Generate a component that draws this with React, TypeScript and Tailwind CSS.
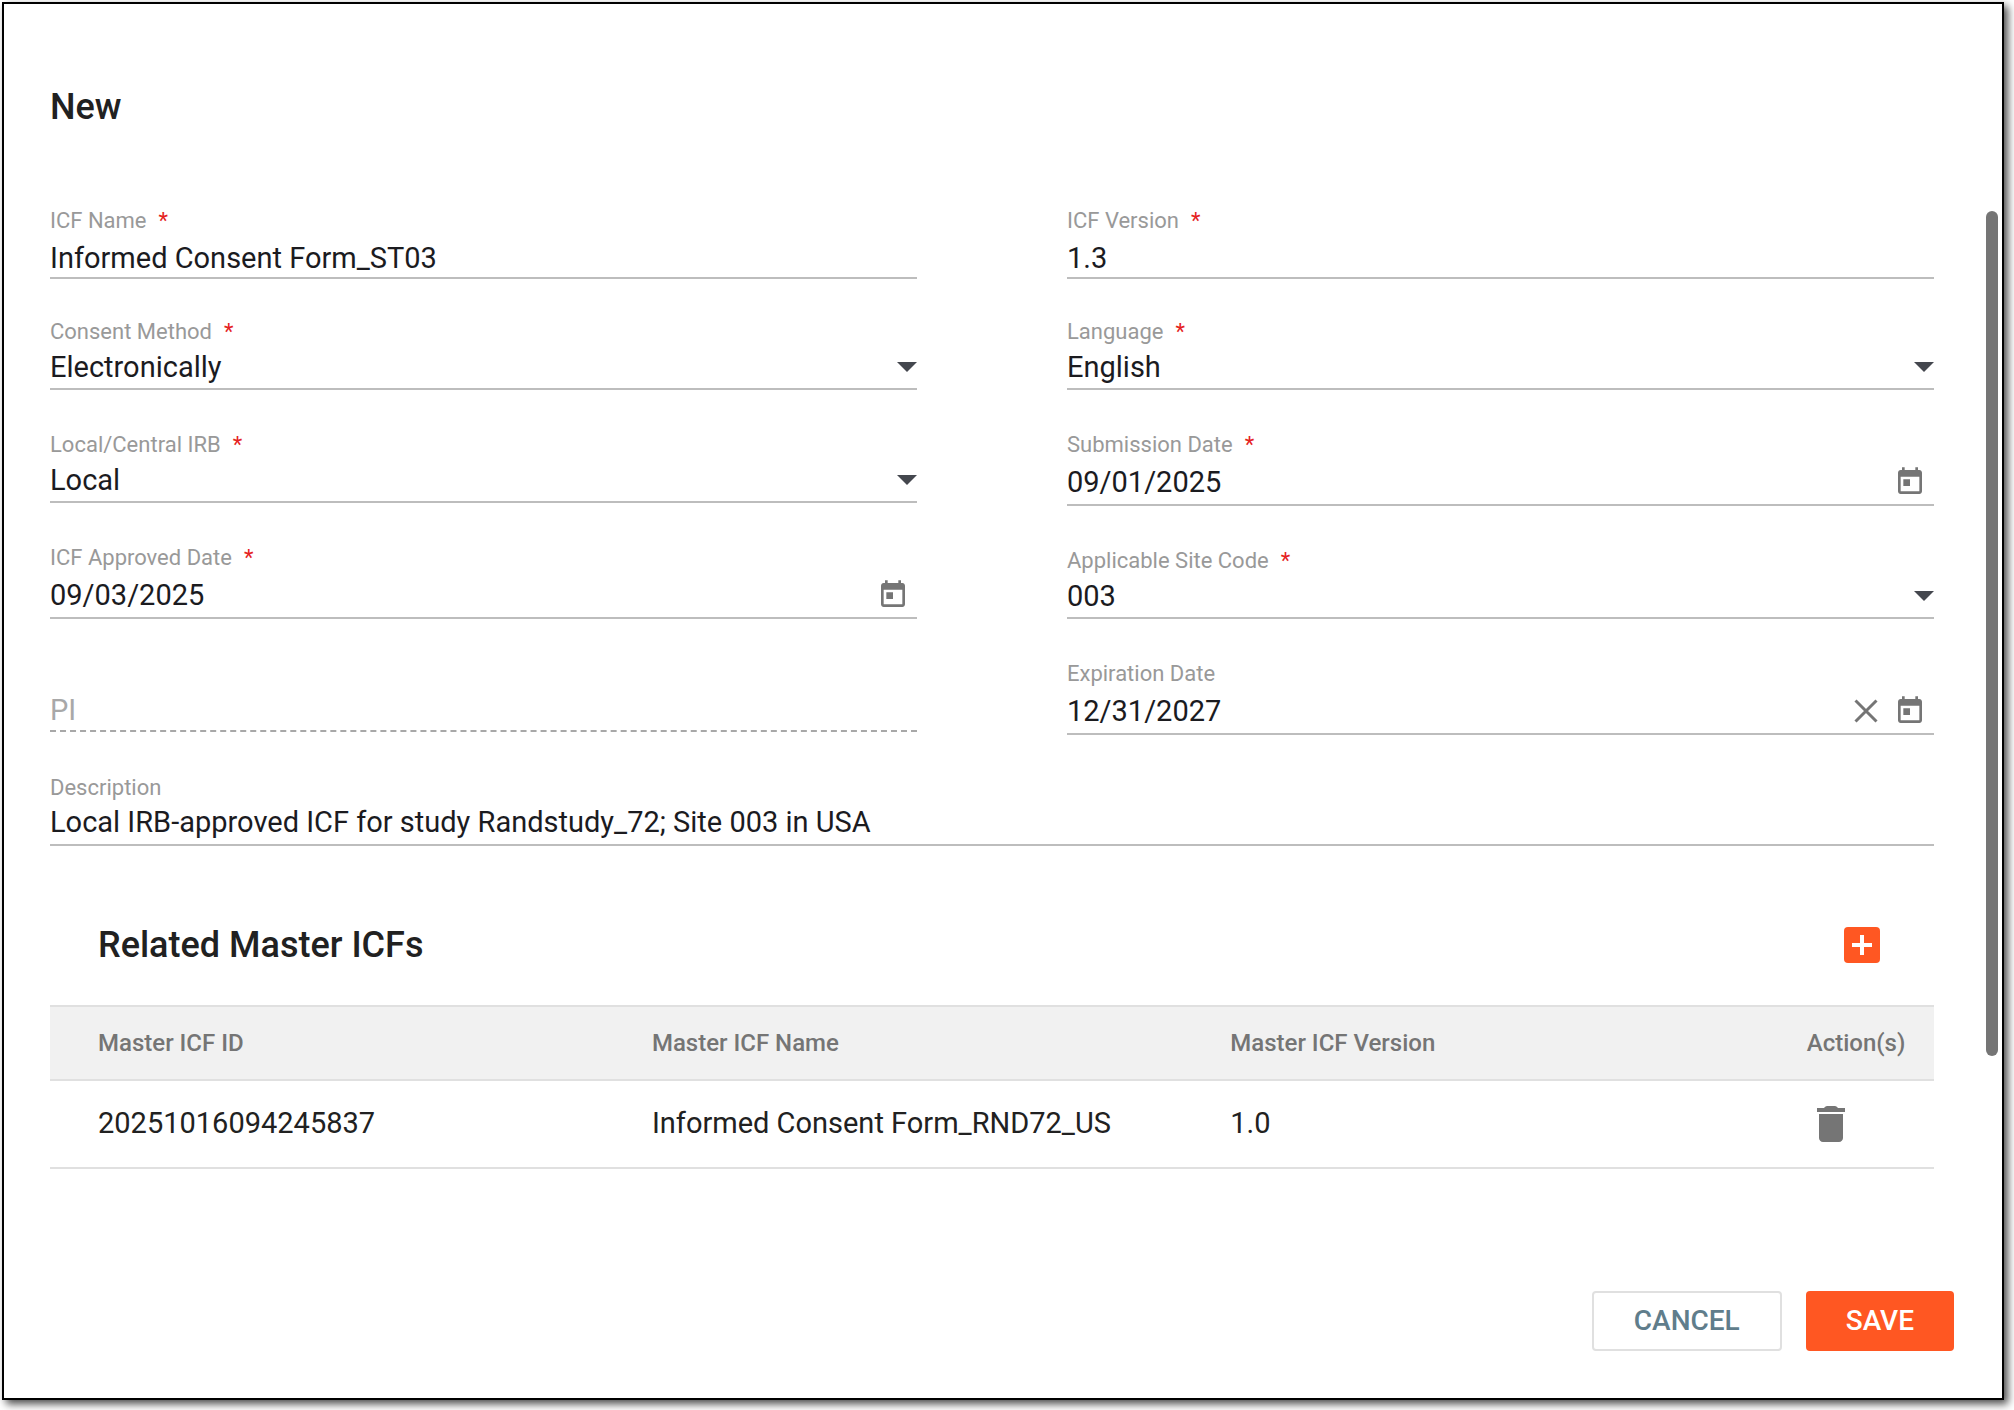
import React, { useState } from 'react';

interface FieldProps {
  id: string;
  label: string;
  value: string;
  required?: boolean;
  onChange: (id: string, value: string) => void;
}

interface SelectFieldProps extends FieldProps {
  options: string[];
}

interface DateFieldProps extends FieldProps {
  clearable?: boolean;
}

interface MasterIcf {
  id: string;
  name: string;
  version: string;
}

const FieldLabel: React.FC<{ id: string; label: string; required?: boolean }> = ({ id, label, required }) => (
  <label htmlFor={id} className="block text-[22px] leading-6 text-[#999999]">
    {label}
    {required && <span className="ml-3 text-[#e52222]">*</span>}
  </label>
);

const ArrowIcon = () => (
  <svg viewBox="0 0 20 10" className="pointer-events-none absolute right-0 top-[13px] h-[10px] w-5" fill="#44474e">
    <path d="M0 0h20L10 10z" />
  </svg>
);

const CalendarIcon = () => (
  <svg viewBox="0 0 24 24" className="size-8" fill="#757575">
    <path d="M19 3h-1V1h-2v2H8V1H6v2H5c-1.11 0-1.99.9-1.99 2L3 19c0 1.1.89 2 2 2h14c1.1 0 2-.9 2-2V5c0-1.1-.9-2-2-2zm0 16H5V8h14v11zM7 10h5v5H7z" />
  </svg>
);

const ClearIcon = () => (
  <svg viewBox="0 0 24 24" className="size-6" fill="none" stroke="#757575" strokeWidth="3">
    <path d="M1.5 1.5l21 21M22.5 1.5l-21 21" />
  </svg>
);

const TrashIcon = () => (
  <svg viewBox="0 0 24 24" className="size-12" fill="#757575">
    <path d="M6 19c0 1.1.9 2 2 2h8c1.1 0 2-.9 2-2V7H6v12zM19 4h-3.5l-.6-.6q-.4-.4-1-.4h-3.8q-.6 0-1 .4l-.6.6H5v2h14V4z" />
  </svg>
);

const TextField: React.FC<FieldProps> = ({ id, label, value, required, onChange }) => (
  <div>
    <FieldLabel id={id} label={label} required={required} />
    <div className="border-b-2 border-[#bdbdbd] pt-[7px] pb-px">
      <input id={id} value={value} onChange={e => onChange(id, e.target.value)} className="block h-9 w-full bg-transparent text-[29px] leading-9 outline-none" />
    </div>
  </div>
);

const TextAreaField: React.FC<FieldProps> = ({ id, label, value, required, onChange }) => (
  <div>
    <FieldLabel id={id} label={label} required={required} />
    <div className="border-b-2 border-[#bdbdbd] pt-1 pb-1">
      <textarea id={id} rows={1} value={value} onChange={e => onChange(id, e.target.value)} className="block h-9 w-full resize-none overflow-hidden bg-transparent text-[29px] leading-9 outline-none" />
    </div>
  </div>
);

const SelectField: React.FC<SelectFieldProps> = ({ id, label, value, required, options, onChange }) => (
  <div>
    <FieldLabel id={id} label={label} required={required} />
    <div className="border-b-2 border-[#bdbdbd] pt-[5px] pb-[3px]">
      <div className="relative">
        <select id={id} value={value} onChange={e => onChange(id, e.target.value)} className="block h-9 w-full appearance-none bg-transparent text-[29px] leading-9 outline-none">
          {options.map(o => <option key={o} value={o}>{o}</option>)}
        </select>
        <ArrowIcon />
      </div>
    </div>
  </div>
);

const DateField: React.FC<DateFieldProps> = ({ id, label, value, required, clearable, onChange }) => (
  <div>
    <FieldLabel id={id} label={label} required={required} />
    <div className="flex items-center border-b-2 border-[#bdbdbd] pt-[7px] pr-2 pb-1">
      <input id={id} value={value} onChange={e => onChange(id, e.target.value)} className="block h-9 min-w-0 flex-1 bg-transparent text-[29px] leading-9 outline-none" />
      {clearable && (
        <button type="button" aria-label="Clear date" className="mr-4" onClick={() => onChange(id, '')}>
          <ClearIcon />
        </button>
      )}
      <button type="button" aria-label="Open calendar"><CalendarIcon /></button>
    </div>
  </div>
);

const App: React.FC = () => {
  const [form, setForm] = useState<Record<string, string>>({
    name: 'Informed Consent Form_ST03',
    version: '1.3',
    method: 'Electronically',
    language: 'English',
    irb: 'Local',
    submissionDate: '09/01/2025',
    approvedDate: '09/03/2025',
    siteCode: '003',
    expirationDate: '12/31/2027',
    description: 'Local IRB-approved ICF for study Randstudy_72; Site 003 in USA',
  });
  const [masters, setMasters] = useState<MasterIcf[]>([
    { id: '20251016094245837', name: 'Informed Consent Form_RND72_US', version: '1.0' },
  ]);

  const update = (id: string, value: string) => setForm(prev => ({ ...prev, [id]: value }));

  return (
    <div className="min-h-screen bg-white pt-[2px] pr-[10px] pb-[10px] pl-[2px] font-[Roboto,sans-serif] text-[#1b1b1f]">
      <form
        onSubmit={e => e.preventDefault()}
        className="relative flex min-h-[calc(100vh-12px)] flex-col border-2 border-black bg-white pt-[83px] pr-12 pb-[47px] pl-[46px] shadow-[4px_4px_8px_rgba(0,0,0,0.7)]"
      >
        <h1 className="text-4xl font-medium text-[#212121]">New</h1>

        <div className="mt-[82px] mr-5">
          <div className="grid grid-cols-2 gap-x-[150px]">
            <TextField id="name" label="ICF Name" value={form.name} required onChange={update} />
            <TextField id="version" label="ICF Version" value={form.version} required onChange={update} />
          </div>

          <div className="mt-[41px] grid grid-cols-2 gap-x-[150px]">
            <div className="flex flex-col gap-[43px]">
              <SelectField id="method" label="Consent Method" value={form.method} required options={['Electronically', 'Paper']} onChange={update} />
              <SelectField id="irb" label="Local/Central IRB" value={form.irb} required options={['Local', 'Central']} onChange={update} />
              <DateField id="approvedDate" label="ICF Approved Date" value={form.approvedDate} required onChange={update} />
              <div className="border-b-2 border-dashed border-[#a8a8a8] pt-[30px] pb-[2px]">
                <input aria-label="PI" placeholder="PI" disabled className="block h-9 w-full bg-transparent text-[29px] leading-9 placeholder:text-[#a8a8a8]" />
              </div>
            </div>
            <div className="flex flex-col gap-[43px]">
              <SelectField id="language" label="Language" value={form.language} required options={['English', 'Spanish']} onChange={update} />
              <DateField id="submissionDate" label="Submission Date" value={form.submissionDate} required onChange={update} />
              <SelectField id="siteCode" label="Applicable Site Code" value={form.siteCode} required options={['001', '002', '003']} onChange={update} />
              <DateField id="expirationDate" label="Expiration Date" value={form.expirationDate} clearable onChange={update} />
            </div>
          </div>

          <div className="mt-[41px]">
            <TextAreaField id="description" label="Description" value={form.description} onChange={update} />
          </div>

          <div className="mt-[81px] flex items-center justify-between pr-[54px] pl-12">
            <h2 className="text-4xl leading-9 font-medium text-[#212121]">Related Master ICFs</h2>
            <button type="button" aria-label="Add master ICF" className="flex size-9 items-center justify-center rounded bg-[#ff5722]">
              <svg viewBox="0 0 20 20" className="size-5" fill="#fff">
                <path d="M8 0h4v8h8v4h-8v8H8v-8H0V8h8z" />
              </svg>
            </button>
          </div>

          <table className="mt-[42px] w-full table-fixed border-collapse text-left">
            <thead>
              <tr className="h-[74px] border-y-2 border-[#e0e0e0] bg-[#f1f1f1] text-2xl text-[#757575]">
                <th className="w-[29.4%] pl-12 font-medium">Master ICF ID</th>
                <th className="w-[30.7%] pl-12 font-medium">Master ICF Name</th>
                <th className="w-[30.6%] pl-12 font-medium">Master ICF Version</th>
                <th className="pl-12 font-medium">Action(s)</th>
              </tr>
            </thead>
            <tbody>
              {masters.map(m => (
                <tr key={m.id} className="h-[88px] border-b-2 border-[#e0e0e0] text-[29px] text-[#212121]">
                  <td className="pl-12">{m.id}</td>
                  <td className="pl-12">{m.name}</td>
                  <td className="pl-12">{m.version}</td>
                  <td className="pl-12">
                    <button type="button" aria-label="Delete" className="block" onClick={() => setMasters(prev => prev.filter(x => x.id !== m.id))}>
                      <TrashIcon />
                    </button>
                  </td>
                </tr>
              ))}
            </tbody>
          </table>
        </div>

        <div className="mt-auto flex justify-end gap-6 text-[28px] font-medium">
          <button type="button" className="h-15 rounded border-2 border-[#e0e0e0] px-10 text-[#607d8b]">CANCEL</button>
          <button type="submit" className="h-15 rounded bg-[#ff5722] px-10 text-white">SAVE</button>
        </div>

        {/* scrollbar thumb */}
        <div className="absolute top-[207px] right-1 h-[845px] w-3 rounded-full bg-[#757575]" />
      </form>
    </div>
  );
};

export default App;
